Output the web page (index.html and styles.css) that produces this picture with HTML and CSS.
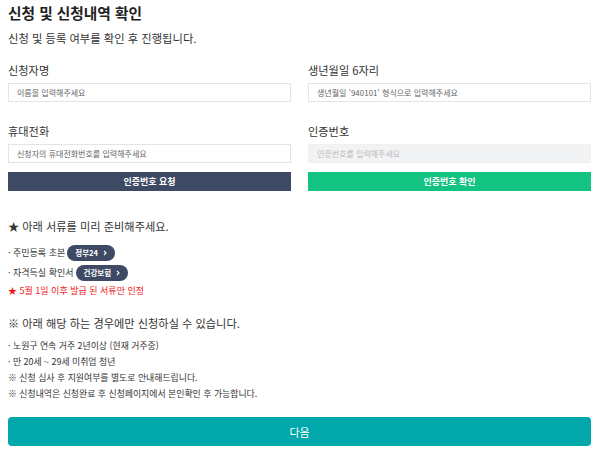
FILE: index.html
```html
<!DOCTYPE html>
<html lang="ko">
<head>
<meta charset="utf-8">
<link rel="stylesheet" href="styles.css">
</head>
<body>
<div class="page">
  <h1 class="title">신청 및 신청내역 확인</h1>
  <p class="subtitle">신청 및 등록 여부를 확인 후 진행됩니다.</p>

  <div class="grid">
    <div class="field">
      <label class="label">신청자명</label>
      <div class="input">이름을 입력해주세요</div>
    </div>
    <div class="field">
      <label class="label">생년월일 6자리</label>
      <div class="input">생년월일 '940101' 형식으로 입력해주세요</div>
    </div>
    <div class="field">
      <label class="label">휴대전화</label>
      <div class="input">신청자의 휴대전화번호를 입력해주세요</div>
      <button class="btn btn-dark">인증번호 요청</button>
    </div>
    <div class="field">
      <label class="label">인증번호</label>
      <div class="input input-disabled">인증번호를 입력해주세요</div>
      <button class="btn btn-green">인증번호 확인</button>
    </div>
  </div>

  <h2 class="section-title">★ 아래 서류를 미리 준비해주세요.</h2>
  <ul class="docs">
    <li>· 주민등록 초본 <span class="pill">정부24<svg class="chev" viewBox="0 0 4 6" width="4" height="6"><path d="M1 0.8 L3 3 L1 5.2" fill="none" stroke="#fff" stroke-width="1.2"/></svg></span></li>
    <li>· 자격득실 확인서 <span class="pill">건강보험<svg class="chev" viewBox="0 0 4 6" width="4" height="6"><path d="M1 0.8 L3 3 L1 5.2" fill="none" stroke="#fff" stroke-width="1.2"/></svg></span></li>
    <li class="red">★ 5월 1일 이후 발급 된 서류만 인정</li>
  </ul>

  <h2 class="section-title sec2">※ 아래 해당 하는 경우에만 신청하실 수 있습니다.</h2>
  <ul class="notes">
    <li>· 노원구 연속 거주 2년이상 (현재 거주중)</li>
    <li>· 만 20세 ~ 29세 미취업 청년</li>
    <li>※ 신청 심사 후 지원여부를 별도로 안내해드립니다.</li>
    <li>※ 신청내역은 신청완료 후 신청페이지에서 본인확인 후 가능합니다.</li>
  </ul>

  <button class="next">다음</button>
</div>
</body>
</html>
```

FILE: styles.css
```css
* { box-sizing: border-box; }
html, body { margin: 0; padding: 0; background: #fff; }
body {
  font-family: "Noto Sans CJK KR", "Noto Sans", sans-serif;
  color: #333;
}
.page { padding: 0 9px 0 8px; }
.title {
  margin: 0;
  padding-top: 3px;
  font-size: 14.7px;
  line-height: 20px;
  font-weight: 700;
  color: #222;
}
.subtitle {
  margin: 6px 0 0;
  font-size: 11.3px;
  line-height: 18px;
  color: #333;
}
.grid {
  display: grid;
  grid-template-columns: 1fr 1fr;
  column-gap: 17px;
  row-gap: 21px;
  margin-top: 15px;
}
.field { display: flex; flex-direction: column; }
.label {
  font-size: 11.2px;
  line-height: 16px;
  color: #333;
  margin-bottom: 5px;
}
.input {
  height: 19px;
  border: 1px solid #e4e4e4;
  background: #fff;
  font-size: 8px;
  line-height: 17px;
  padding-left: 8px;
  color: #666;
}
.input-disabled { background: #f2f3f5; color: #bbb; border-color: #f0f0f0; }
.btn {
  margin-top: 9px;
  height: 19px;
  border: 0;
  font-family: inherit;
  font-size: 9px;
  font-weight: 700;
  color: #fff;
  padding: 0;
}
.btn-dark { background: #3e4a63; }
.btn-green { background: #12c382; }
.section-title {
  margin: 26px 0 0;
  font-size: 11.2px;
  line-height: 18px;
  font-weight: 400;
  color: #333;
}
.sec2 { margin-top: 15px; }
.docs, .notes { list-style: none; margin: 0; padding: 0; }
.docs { margin-top: 8px; }
.docs li {
  font-size: 9px;
  line-height: 20px;
  height: 20px;
  color: #333;
  display: flex;
  align-items: center;
  gap: 2px;
}
.docs li.red { color: #f21818; line-height: 16px; height: 16px; }
.pill {
  display: inline-flex;
  align-items: center;
  background: #3e4a63;
  color: #fff;
  font-size: 7.5px;
  font-weight: 700;
  height: 16px;
  padding: 0 8px 0 8px;
  border-radius: 8px;
}
.chev { margin-left: 5px; }
.notes { margin-top: 6px; }
.notes li {
  font-size: 8.9px;
  line-height: 16px;
  color: #333;
}
.next {
  display: block;
  width: 100%;
  margin-top: 15px;
  height: 29px;
  border: 0;
  border-radius: 4px;
  background: #00a8ab;
  color: #fff;
  font-family: inherit;
  font-size: 11px;
}
```
